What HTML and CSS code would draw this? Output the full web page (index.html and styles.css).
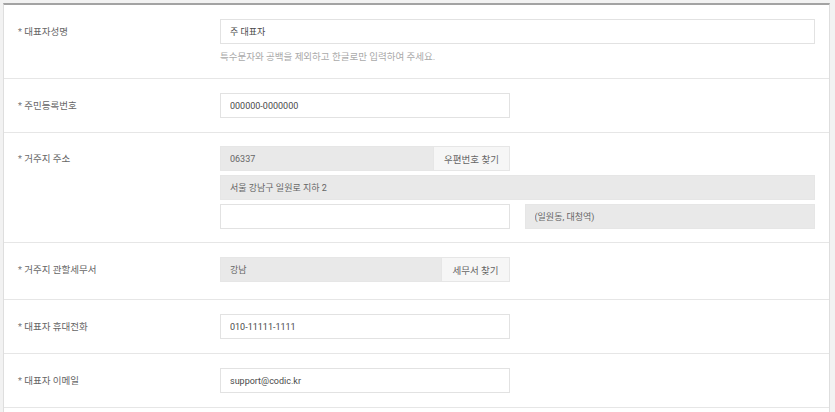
FILE: index.html
```html
<!DOCTYPE html>
<html lang="ko">
<head>
  <meta charset="UTF-8" />
  <meta name="viewport" content="width=device-width, initial-scale=1.0" />
  <title>대표자 정보</title>
  <link rel="stylesheet" href="styles.css">
</head>
<body>
  <div class="form-box">
    <div class="row">
      <label class="row-label" for="ceo-name"><span class="req">*</span> 대표자성명</label>
      <div class="row-field">
        <input type="text" id="ceo-name" class="input full" value="주 대표자" />
        <p class="help">특수문자와 공백을 제외하고 한글로만 입력하여 주세요.</p>
      </div>
    </div>

    <div class="row">
      <label class="row-label" for="rrn"><span class="req">*</span> 주민등록번호</label>
      <div class="row-field">
        <input type="text" id="rrn" class="input half" value="000000-0000000" />
      </div>
    </div>

    <div class="row row-address">
      <label class="row-label" for="zip"><span class="req">*</span> 거주지 주소</label>
      <div class="row-field stack">
        <div class="input-group half">
          <input type="text" id="zip" class="input readonly" value="06337" readonly />
          <button type="button" class="find-btn zip-btn">우편번호 찾기</button>
        </div>
        <input type="text" class="input readonly full" value="서울 강남구 일원로 지하 2" readonly />
        <div class="split">
          <input type="text" class="input half" value="" />
          <input type="text" class="input readonly extra" value="(일원동, 대청역)" readonly />
        </div>
      </div>
    </div>

    <div class="row row-tax">
      <label class="row-label" for="tax-office"><span class="req">*</span> 거주지 관할세무서</label>
      <div class="row-field">
        <div class="input-group half">
          <input type="text" id="tax-office" class="input readonly" value="강남" readonly />
          <button type="button" class="find-btn tax-btn">세무서 찾기</button>
        </div>
      </div>
    </div>

    <div class="row">
      <label class="row-label" for="phone"><span class="req">*</span> 대표자 휴대전화</label>
      <div class="row-field">
        <input type="text" id="phone" class="input half" value="010-11111-1111" />
      </div>
    </div>

    <div class="row">
      <label class="row-label" for="email"><span class="req">*</span> 대표자 이메일</label>
      <div class="row-field">
        <input type="text" id="email" class="input half" value="support@codic.kr" />
      </div>
    </div>

    <div class="row row-empty"></div>
  </div>
</body>
</html>
```

FILE: styles.css
```css
body {
  margin: 0;
  background: #f2f2f2;
  font-family: Roboto, "Noto Sans CJK KR", sans-serif;
  font-size: 9px;
  color: #555;
}

.form-box {
  margin: 3px 5px 0 3px;
  background: white;
  border-top: 2px solid #a3a3a3;
  border-left: 1px solid #dedede;
  border-right: 1px solid #dedede;
}

.row {
  display: grid;
  grid-template-columns: 216px 595px;
  padding: 14px 0;
  border-bottom: 1px solid #e6e6e6;
}

.row-address {
  padding: 13px 0;
}

.row-tax {
  padding-bottom: 17px;
}

.row-empty {
  height: 40px;
}

.row-label {
  display: block;
  height: 25px;
  padding-left: 14px;
  line-height: 25px;
  font-size: 9.5px;
  color: #666;
  white-space: nowrap;
}

.req {
  font-size: 9px;
  line-height: 1;
  color: #777;
}

.row-field.stack {
  display: flex;
  flex-direction: column;
  gap: 4px;
}

.input {
  display: block;
  box-sizing: border-box;
  height: 25px;
  margin: 0;
  padding: 0 9px;
  border: 1px solid #e2e2e2;
  border-radius: 0;
  background: white;
  font-family: inherit;
  font-size: 9px;
  color: #4a4a4a;
  outline: none;
}

.input.readonly {
  background: #e9e9e9;
  border-color: #e6e6e6;
  color: #666;
}

.full {
  width: 595px;
}

.half {
  width: 290px;
}

.input-group {
  display: flex;
}

.input-group .input {
  flex: 1;
  min-width: 0;
}

.find-btn {
  height: 25px;
  margin: 0;
  padding: 0;
  border: 1px solid #e6e6e6;
  border-left: none;
  background: #f6f6f6;
  font-family: inherit;
  font-size: 9.5px;
  color: #666;
  cursor: pointer;
}

.zip-btn {
  width: 76px;
}

.tax-btn {
  width: 68px;
}

.split {
  display: flex;
  gap: 15px;
}

.split .extra {
  width: 291px;
}

.help {
  margin: 6px 0 0;
  line-height: 14px;
  font-size: 9.5px;
  color: #aaa;
}
```
